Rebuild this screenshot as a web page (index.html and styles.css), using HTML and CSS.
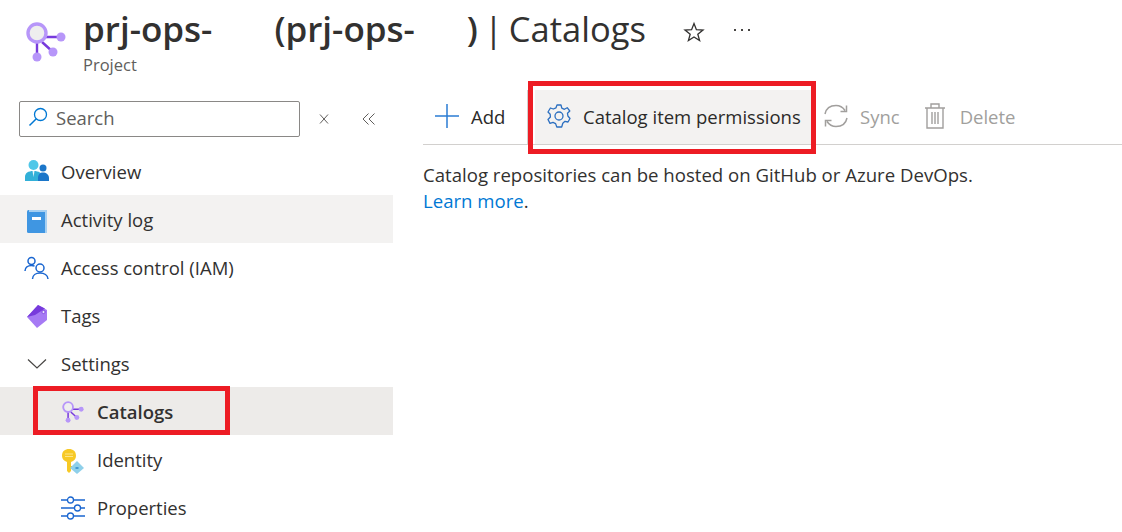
FILE: index.html
```html
<!DOCTYPE html>
<html lang="en">
<head>
<meta charset="UTF-8" />
<title>Catalogs</title>
<link rel="stylesheet" href="styles.css">
</head>
<body>
  <header class="page-head">
    <svg class="head-icon" width="44" height="44" viewBox="0 0 44 44">
      <path d="M20 17 H37 M18 22 L29 32 M13 22 V37" stroke="#773adc" stroke-width="2.400" fill="none"/>
      <circle cx="13" cy="13" r="9" fill="#eeeeee" stroke="#b796f9" stroke-width="3.400"/>
      <circle cx="37" cy="17" r="4.500" fill="#b796f9"/>
      <circle cx="29" cy="32" r="4.500" fill="#b796f9"/>
      <circle cx="13" cy="37" r="4.500" fill="#b796f9"/>
    </svg>
    <div class="head-text">
      <h1><b>prj-ops-</b><span class="gap-a"></span><b>(prj-ops-</b><span class="gap-b"></span><b>)</b><span class="page-name"> | Catalogs</span></h1>
      <div class="subtitle">Project</div>
    </div>
    <svg class="star" width="22" height="22" viewBox="0 0 22 22">
      <path d="M11 2.500 L13.400 8.700 L20 9 L14.800 13.200 L16.600 19.600 L11 16 L5.400 19.600 L7.200 13.200 L2 9 L8.600 8.700 Z" fill="none" stroke="#323130" stroke-width="1.300"/>
    </svg>
    <div class="more">
      <span></span><span></span><span></span>
    </div>
  </header>

  <div class="layout">
    <nav class="sidebar">
      <div class="search-row">
        <div class="search-box">
          <svg width="22" height="22" viewBox="0 0 22 22">
            <circle cx="13.500" cy="8.500" r="6" fill="none" stroke="#0078d4" stroke-width="1.300"/>
            <path d="M9.300 12.700 L2.500 19.500" stroke="#0078d4" stroke-width="1.500"/>
          </svg>
          <span>Search</span>
        </div>
        <svg class="tool tool-x" width="12" height="12" viewBox="0 0 12 12">
          <path d="M2 1.500 L10 10.500 M10 1.500 L2 10.500" stroke="#605e5c" stroke-width="1" fill="none"/>
        </svg>
        <svg class="tool tool-back" width="14" height="12" viewBox="0 0 14 12">
          <path d="M6.500 0.500 L1 6 L6.500 11.500 M12.500 0.500 L7 6 L12.500 11.500" stroke="#605e5c" stroke-width="1" fill="none"/>
        </svg>
      </div>

      <ul class="menu">
        <li class="item">
          <svg class="icon" width="26" height="24" viewBox="0 0 26 24">
            <circle cx="9.500" cy="6" r="5" fill="#50c7e8"/>
            <path d="M1 22 V18 C1 14 4 12 9.500 12 C15 12 18 14 18 18 V22 Z" fill="#32b0d8"/>
            <path d="M8.500 12 H10.500 L9.500 18 Z" fill="#e6f6fb"/>
            <circle cx="19" cy="9" r="3.500" fill="#1b76c9"/>
            <path d="M14 22 V19 C14 15.500 16 13.500 19 13.500 C22 13.500 25 15.500 25 19 V22 Z" fill="#1b76c9"/>
          </svg>
          Overview
        </li>
        <li class="item hovered">
          <svg class="icon" width="26" height="26" viewBox="0 0 26 26">
            <rect x="3" y="3" width="20" height="23" rx="1.500" fill="#3f96e2"/>
            <path d="M5 3 H23 V26 H21 V5 H5 Z" fill="#a6d0f2"/>
            <rect x="8" y="10" width="9" height="3" fill="#ffffff"/>
          </svg>
          Activity log
        </li>
        <li class="item">
          <svg class="icon" width="26" height="26" viewBox="0 0 26 26">
            <circle cx="7.500" cy="6" r="3.500" fill="none" stroke="#1a66d0" stroke-width="1.500"/>
            <path d="M1 16 C1 12.500 4 10.500 7.500 10.500 C8.500 10.500 9.500 10.700 10.500 11" fill="none" stroke="#1a66d0" stroke-width="1.500"/>
            <circle cx="16" cy="13" r="4" fill="none" stroke="#1a66d0" stroke-width="1.500"/>
            <path d="M8.500 24 C8.500 20 12 18 16 18 C20 18 24 20 24 24" fill="none" stroke="#1a66d0" stroke-width="1.500"/>
          </svg>
          Access control (IAM)
        </li>
        <li class="item">
          <svg class="icon" width="26" height="26" viewBox="0 0 26 26">
            <path d="M3 14 L14 2 L23 7 L23 17 L13 25 Z" fill="#a67af4"/>
            <path d="M3 14 L14 2 L21 5.500 L11 12 Z" fill="#773adc"/>
            <circle cx="19.500" cy="9" r="1.600" fill="#e8e0fa" stroke="#773adc" stroke-width="0.800"/>
          </svg>
          Tags
        </li>
        <li class="item">
          <svg class="icon chevron" width="20" height="12" viewBox="0 0 20 12">
            <path d="M1 1.500 L10 10 L19 1.500" fill="none" stroke="#484644" stroke-width="1.200"/>
          </svg>
          Settings
        </li>
        <li class="item sub selected">
          <svg class="icon" width="24" height="24" viewBox="0 0 44 44">
            <path d="M20 17 H37 M18 22 L29 32 M13 22 V37" stroke="#773adc" stroke-width="2.800" fill="none"/>
            <circle cx="13" cy="13" r="9" fill="#eeeeee" stroke="#b796f9" stroke-width="3.400"/>
            <circle cx="37" cy="17" r="4.500" fill="#b796f9"/>
            <circle cx="29" cy="32" r="4.500" fill="#b796f9"/>
            <circle cx="13" cy="37" r="4.500" fill="#b796f9"/>
          </svg>
          Catalogs
          <span class="callout callout-nav"></span>
        </li>
        <li class="item sub">
          <svg class="icon" width="24" height="26" viewBox="0 0 24 26">
            <path d="M1 8 C1 3 4 1 8 1 C12 1 15 3 15 8 C15 11 13 13 10 14 V23 L8 25 L6 23 V14 C3 13 1 11 1 8 Z" fill="#f7c926"/>
            <rect x="10" y="18" width="2.500" height="2" fill="#eab71d"/>
            <path d="M4 6 H12 M4 8.500 H12" stroke="#fde68a" stroke-width="1"/>
            <path d="M16 13 L23 20 L16 26 L9 20 Z" fill="#8fd0ea"/>
            <path d="M14.500 20 H17.500" stroke="#2a87c8" stroke-width="1.500"/>
          </svg>
          Identity
        </li>
        <li class="item sub">
          <svg class="icon" width="24" height="24" viewBox="0 0 24 24">
            <path d="M0 4 H6 M13 4 H24 M0 12 H13 M20 12 H24 M0 20 H6 M13 20 H24" stroke="#1a66d0" stroke-width="1.300"/>
            <circle cx="9.500" cy="4" r="3" fill="none" stroke="#1a66d0" stroke-width="1.300"/>
            <circle cx="16.500" cy="12" r="3" fill="none" stroke="#1a66d0" stroke-width="1.300"/>
            <circle cx="9.500" cy="20" r="3" fill="none" stroke="#1a66d0" stroke-width="1.300"/>
          </svg>
          Properties
        </li>
      </ul>
    </nav>

    <main class="content">
      <div class="toolbar">
        <button class="tb-btn tb-add">
          <svg width="24" height="24" viewBox="0 0 24 24">
            <path d="M12 0 V24 M0 12 H24" stroke="#2b7cd3" stroke-width="1.500"/>
          </svg>
          Add
        </button>
        <div class="tb-sep"></div>
        <button class="tb-btn tb-perm">
          <svg width="24" height="24" viewBox="0 0 24 24">
            <path d="M10 1 H14 L14.800 4.200 L17.400 5.300 L20.200 3.700 L22.800 7 L20.500 9.300 L20.900 12 L23 14.500 L21 18 L18 17.300 L15.800 19.300 L14.700 23 H9.800 L8.600 19.600 L6 18.300 L3 19.400 L1 15.500 L3.400 13 L3.200 10.300 L1 8 L3.400 4 L6.300 5 L9 3.800 Z" fill="none" stroke="#2b6fc0" stroke-width="1.300" stroke-linejoin="round"/>
            <circle cx="12" cy="12" r="4" fill="none" stroke="#2b6fc0" stroke-width="1.300"/>
          </svg>
          Catalog item permissions
          <span class="callout callout-bar"></span>
        </button>
        <button class="tb-btn tb-sync off">
          <svg width="26" height="26" viewBox="0 0 26 26">
            <path d="M2 11 C3 6 7 2.500 13 2.500 C17 2.500 20 4.500 22 7.500 M23.500 2.500 V8.500 H17.500" fill="none" stroke="#a19f9d" stroke-width="1.500"/>
            <path d="M24 15 C23 20 19 23.500 13 23.500 C9 23.500 6 21.500 4 18.500 M2.500 23.500 V17.500 H8.500" fill="none" stroke="#a19f9d" stroke-width="1.500"/>
          </svg>
          Sync
        </button>
        <button class="tb-btn tb-del off">
          <svg width="20" height="26" viewBox="0 0 20 26">
            <path d="M0 5 H20 M6 5 V1 H14 V5 M2 5 V25 H18 V5 M7 9 V21 M10 9 V21 M13 9 V21" fill="none" stroke="#a19f9d" stroke-width="1.400"/>
          </svg>
          Delete
        </button>
      </div>
      <p class="intro">Catalog repositories can be hosted on GitHub or Azure DevOps.<br><a href="#">Learn more</a>.</p>
    </main>
  </div>
</body>
</html>
```

FILE: styles.css
```css
* {
  box-sizing: border-box;
}
body {
  margin: 0;
  height: 532px;
  overflow: hidden;
  background: #fff;
  color: #323130;
  font-family: "Open Sans", "Noto Sans", sans-serif;
  font-size: 18.5px;
}

.page-head {
  display: flex;
  align-items: flex-start;
  height: 81px;
  padding: 0 0 0 24px;
}
.head-icon {
  margin-top: 20px;
  flex: none;
}
.head-text {
  margin-left: 15px;
  padding-top: 6px;
}
h1 {
  margin: 0;
  font-size: 35px;
  font-weight: 400;
  line-height: 46px;
  white-space: nowrap;
}
h1 b {
  font-weight: 600;
}
.page-name {
  font-size: 34.500px;
  word-spacing: -3px;
}
.gap-a {
  display: inline-block;
  width: 62px;
}
.gap-b {
  display: inline-block;
  width: 52px;
}
.subtitle {
  margin-top: 2px;
  font-size: 16.500px;
  line-height: 22px;
  color: #605e5c;
}
.star {
  margin: 21px 0 0 37px;
}
.more {
  display: flex;
  gap: 5px;
  margin: 29px 0 0 29px;
}
.more span {
  width: 2px;
  height: 2px;
  background: #484644;
}

.layout {
  display: flex;
}
.sidebar {
  width: 393px;
  flex: none;
}
.search-row {
  display: flex;
  align-items: center;
  padding: 20px 0 0 19px;
  height: 56px;
}
.search-box {
  display: flex;
  align-items: center;
  gap: 7px;
  width: 281px;
  height: 36px;
  padding: 0 0 4px 7px;
  border: 1px solid #8a8886;
  border-radius: 2px;
  color: #605e5c;
}
.tool-x {
  margin-left: 18px;
}
.tool-back {
  margin-left: 32px;
}

.menu {
  list-style: none;
  margin: 10px 0 0;
  padding: 0;
}
.item {
  position: relative;
  display: flex;
  align-items: center;
  height: 48px;
  padding-left: 61px;
}
.item .icon {
  position: absolute;
  left: 24px;
  top: 12px;
}
.item .chevron {
  left: 27px;
  top: 19px;
}
.hovered {
  background: #f3f2f1;
}
.sub {
  padding-left: 97px;
}
.sub .icon {
  left: 61px;
  top: 13px;
}
.selected {
  background: #edebe9;
  font-weight: 600;
}
.callout {
  position: absolute;
  border: 5px solid #ed1c24;
  pointer-events: none;
}
.callout-nav {
  left: 33px;
  top: -1px;
  width: 197px;
  height: 49px;
}

.content {
  flex: 1;
  margin-left: 30px;
  margin-top: 9px;
}
.toolbar {
  display: flex;
  align-items: stretch;
  height: 55px;
  border-bottom: 1px solid #d2d0ce;
}
.tb-btn {
  position: relative;
  display: flex;
  align-items: center;
  border: 0;
  background: none;
  padding: 0 0 2px;
  color: #2b2a29;
  font: inherit;
  white-space: nowrap;
}
.tb-add {
  gap: 12px;
  padding-left: 12px;
  width: 104px;
}
.tb-sep {
  width: 2px;
  background: #d2d0ce;
}
.tb-perm {
  gap: 12px;
  margin-left: 6px;
  padding-left: 12px;
  width: 277px;
  background: #f3f2f1;
}
.callout-bar {
  left: -7px;
  top: -9px;
  width: 288px;
  height: 73px;
}
.tb-sync {
  gap: 11px;
  margin-left: 11px;
}
.tb-del {
  gap: 15px;
  margin-left: 25px;
}
.off {
  color: #a19f9d;
}

.intro {
  margin: 17px 0 0;
  line-height: 26px;
  font-size: 18.600px;
}
.intro a {
  color: #0078d4;
  text-decoration: none;
}
```
